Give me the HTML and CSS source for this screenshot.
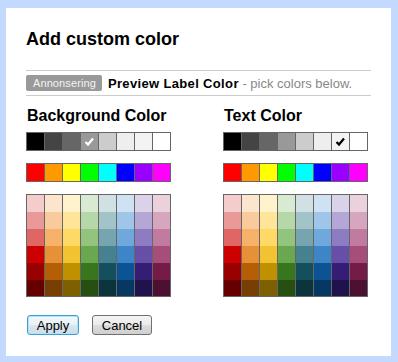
FILE: index.html
```html
<!DOCTYPE html>
<html>

<head>
	<meta charset="utf-8">
	<title>Add custom color</title>
	<link rel="stylesheet" href="styles.css">
</head>

<body>
	<div class='dialog'>
		<h1 class='dialog__title'>Add custom color</h1>

		<div class='preview'>
			<span class='preview__badge'>Annonsering</span>
			<span class='preview__label'>Preview Label Color</span>
			<span class='preview__hint'>&nbsp;- pick colors below.</span>
		</div>

		<div class='pickers'>
			<div class='picker'>
				<h2 class='picker__hed'>Background Color</h2>
				<div class='swatches swatches--gray' data-checked='3' data-check='light'></div>
				<div class='swatches swatches--bright'></div>
				<div class='swatches swatches--pastel'></div>
			</div>
			<div class='picker'>
				<h2 class='picker__hed'>Text Color</h2>
				<div class='swatches swatches--gray' data-checked='6' data-check='dark'></div>
				<div class='swatches swatches--bright'></div>
				<div class='swatches swatches--pastel'></div>
			</div>
		</div>

		<div class='buttons'>
			<button class='btn btn--focus'>Apply</button>
			<button class='btn'>Cancel</button>
		</div>
	</div>

	<script>
		// palette rows, same for both pickers
		var grays = ['#000000', '#444444', '#666666', '#999999', '#cccccc', '#eeeeee', '#f3f3f3', '#ffffff'];
		var brights = ['#ff0000', '#ff9900', '#ffff00', '#00ff00', '#00ffff', '#0000ff', '#9900ff', '#ff00ff'];
		var pastels = [
			['#f4cccc', '#fce5cd', '#fff2cc', '#d9ead3', '#d0e0e3', '#cfe2f3', '#d9d2e9', '#ead1dc'],
			['#ea9999', '#f9cb9c', '#ffe599', '#b6d7a8', '#a2c4c9', '#9fc5e8', '#b4a7d6', '#d5a6bd'],
			['#e06666', '#f6b26b', '#ffd966', '#93c47d', '#76a5af', '#6fa8dc', '#8e7cc3', '#c27ba0'],
			['#cc0000', '#e69138', '#f1c232', '#6aa84f', '#45818e', '#3d85c6', '#674ea7', '#a64d79'],
			['#990000', '#b45f06', '#bf9000', '#38761d', '#134f5c', '#0b5394', '#351c75', '#741b47'],
			['#660000', '#783f04', '#7f6000', '#274e13', '#0c343d', '#073763', '#20124d', '#4c1130']
		];

		var checkSvg = '<svg width="17" height="17" viewBox="0 0 17 17"><path d="M4.5 9 L7 11.5 L12 5.5" fill="none" stroke-width="2.2"/></svg>';

		function fill(box, colors) {
			var checked = box.getAttribute('data-checked');
			colors.forEach(function (c, i) {
				var cell = document.createElement('div');
				cell.className = 'swatch';
				cell.style.background = c;
				if (checked !== null && +checked === i) {
					cell.className += ' is-checked is-' + box.getAttribute('data-check');
					cell.innerHTML = checkSvg;
				}
				box.appendChild(cell);
			});
		}

		document.querySelectorAll('.swatches--gray').forEach(function (el) { fill(el, grays); });
		document.querySelectorAll('.swatches--bright').forEach(function (el) { fill(el, brights); });
		document.querySelectorAll('.swatches--pastel').forEach(function (el) {
			fill(el, [].concat.apply([], pastels));
		});
	</script>
</body>

</html>
```

FILE: styles.css
```css
* {
	box-sizing: border-box;
}

html,
body {
	margin: 0;
	padding: 0;
	font-family: 'Liberation Sans', Arial, sans-serif;
	color: #000;
}

body {
	background: #c3d9ff;
	width: 398px;
	height: 362px;
	padding: 8px 7px 6px 6px;
}

h1,
h2,
p {
	margin: 0;
}

.dialog {
	background: #fff;
	height: 348px;
	padding: 20px 20px 0 20px;
}

.dialog__title {
	font-size: 18px;
	line-height: 22px;
	font-weight: bold;
	margin-bottom: 20px;
}

/* preview strip */

.preview {
	display: flex;
	align-items: center;
	height: 26px;
	border-top: 1px solid #cccccc;
	border-bottom: 1px solid #cccccc;
	font-size: 13px;
}

.preview__badge {
	background: #999999;
	color: #f4f4f4;
	font-size: 11px;
	line-height: 16px;
	height: 16px;
	padding: 0 6px 0 7px;
	border-radius: 2px;
	margin-right: 6px;
	letter-spacing: 0.1px;
}

.preview__label {
	font-weight: bold;
	letter-spacing: 0.35px;
}

.preview__hint {
	color: #888888;
	white-space: pre;
}

/* pickers */

.pickers {
	display: flex;
	gap: 52px;
	margin-top: 10px;
}

.picker__hed {
	font-size: 16px;
	line-height: 19px;
	font-weight: bold;
	margin-bottom: 7px;
	margin-left: 1px;
}

.swatches {
	display: grid;
	grid-template-columns: repeat(8, 17px);
	grid-auto-rows: 17px;
	gap: 1px;
	padding: 1px;
	background: #666666;
	width: 145px;
	margin-bottom: 12px;
}

/* the big grid has column rules only */
.swatches--pastel {
	grid-template-rows: repeat(5, 17px) 16px;
	row-gap: 0;
	margin-bottom: 0;
}

.swatch {
	position: relative;
}

.swatch svg {
	display: block;
}

.is-light svg path {
	stroke: #ffffff;
}

.is-dark svg path {
	stroke: #000000;
}

/* buttons */

.buttons {
	display: flex;
	gap: 13px;
	margin-top: 18px;
	padding-left: 1px;
}

.btn {
	font-family: 'Liberation Sans', Arial, sans-serif;
	font-size: 13px;
	height: 20px;
	width: 60px;
	padding: 0;
	color: #000;
	border: 1px solid #707070;
	border-radius: 3px;
	background: linear-gradient(#f4f4f4, #ebebeb 50%, #dddddd 51%, #cfcfcf);
}

.btn--focus {
	width: 52px;
	border-color: #3c9fd6;
	box-shadow: inset 0 0 0 1px #b5e2f7;
	background: linear-gradient(#f2f8fb, #e8f1f6 50%, #d9e6ee 51%, #cfdde6);
}
```
